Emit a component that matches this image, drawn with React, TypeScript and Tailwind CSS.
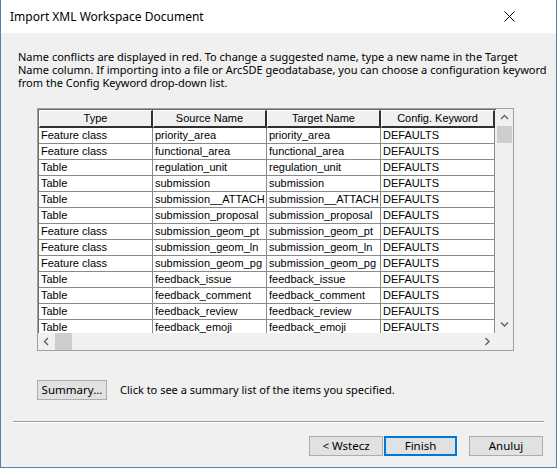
import React from 'react'

const rows: [string, string, string][] = [
  ['Feature class', 'priority_area', 'priority_area'],
  ['Feature class', 'functional_area', 'functional_area'],
  ['Table', 'regulation_unit', 'regulation_unit'],
  ['Table', 'submission', 'submission'],
  ['Table', 'submission__ATTACH', 'submission__ATTACH'],
  ['Table', 'submission_proposal', 'submission_proposal'],
  ['Feature class', 'submission_geom_pt', 'submission_geom_pt'],
  ['Feature class', 'submission_geom_ln', 'submission_geom_ln'],
  ['Feature class', 'submission_geom_pg', 'submission_geom_pg'],
  ['Table', 'feedback_issue', 'feedback_issue'],
  ['Table', 'feedback_comment', 'feedback_comment'],
  ['Table', 'feedback_review', 'feedback_review'],
  ['Table', 'feedback_emoji', 'feedback_emoji'],
]

const headers = ['Type', 'Source Name', 'Target Name', 'Config. Keyword']

const Chevron: React.FC<{ dir: 'up' | 'down' | 'left' | 'right' }> = ({ dir }) => {
  const d = {
    up: 'M1 5 L4.5 1.5 L8 5',
    down: 'M1 1.5 L4.5 5 L8 1.5',
    left: 'M5 1 L1.5 4.5 L5 8',
    right: 'M1.5 1 L5 4.5 L1.5 8',
  }[dir]
  const vertical = dir === 'up' || dir === 'down'
  return (
    <svg width={vertical ? 9 : 7} height={vertical ? 7 : 9} viewBox={vertical ? '0 0 9 7' : '0 0 7 9'}>
      <path d={d} fill="none" stroke="#606060" strokeWidth="1.4" />
    </svg>
  )
}

const WinButton: React.FC<{ label: string; primary?: boolean; className?: string }> = ({ label, primary, className }) => (
  <button
    className={`h-[20px] bg-[#e1e1e1] text-[11.5px] text-black flex items-center justify-center ${
      primary ? 'border-2 border-[#0078d7]' : 'border border-[#adadad]'
    } ${className ?? ''}`}
  >
    {label}
  </button>
)

export default function App() {
  return (
    <div className="w-[558px] h-[470px] bg-white" style={{ fontFamily: '"Noto Sans", "Open Sans", sans-serif' }}>
      <div className="w-[557px] h-[468px] border border-t-0 border-[#4f82b8] flex flex-col bg-[#f0f0f0]">
        {/* Title bar */}
        <div className="h-[33px] bg-white flex items-center justify-between pl-[9px] pr-[41px] shrink-0">
          <span className="text-[12px] text-black">Import XML Workspace Document</span>
          <svg width="11" height="11" viewBox="0 0 11 11">
            <path d="M0.5 0.5 L10.5 10.5 M10.5 0.5 L0.5 10.5" stroke="#000" strokeWidth="1" />
          </svg>
        </div>

        {/* Intro text */}
        <div className="pl-[17px] pt-[17px] text-[11px] leading-[13px] text-black">
          <p className="h-[13px] whitespace-nowrap">
            Name conflicts are displayed in red. To change a suggested name, type a new name in the Target
          </p>
          <p className="h-[13px] whitespace-nowrap">
            Name column. If importing into a file or ArcSDE geodatabase, you can choose a configuration keyword
          </p>
          <p className="h-[13px] whitespace-nowrap">from the Config Keyword drop-down list.</p>
        </div>

        {/* Grid */}
        <div
          className="ml-[36px] mt-[19px] w-[477px] h-[243px] border border-[#a0a0a0] bg-[#f0f0f0] flex"
          style={{ fontFamily: '"Liberation Sans", Arial, sans-serif' }}
        >
          <div className="flex flex-col w-[458px]">
            <div className="flex-1 overflow-hidden border-l border-t border-[#696969]">
              {/* Header */}
              <div className="flex h-[18px]">
                {headers.map((h) => (
                  <div
                    key={h}
                    className="w-[114px] shrink-0 bg-[#f0f0f0] border-t border-l border-white border-r-2 border-b-2 border-r-[#303030] border-b-[#303030] flex items-center justify-center text-[11px] text-black"
                  >
                    {h}
                  </div>
                ))}
              </div>
              {/* Rows */}
              {rows.map((r, i) => (
                <div key={i} className="flex h-[16px]">
                  {[...r, 'DEFAULTS'].map((c, j) => (
                    <div
                      key={j}
                      className="w-[114px] shrink-0 bg-white border-r border-b border-[#8a8a8a] pl-[2px] text-[11px] leading-[15px] text-black whitespace-nowrap overflow-hidden"
                    >
                      {c}
                    </div>
                  ))}
                </div>
              ))}
            </div>
            {/* Horizontal scrollbar */}
            <div className="h-[17px] bg-[#f0f0f0] flex items-center shrink-0">
              <div className="w-[17px] h-[17px] flex items-center justify-center">
                <Chevron dir="left" />
              </div>
              <div className="w-[17px] h-[17px] bg-[#cdcdcd]" />
              <div className="flex-1" />
              <div className="w-[17px] h-[17px] flex items-center justify-center">
                <Chevron dir="right" />
              </div>
            </div>
          </div>
          {/* Vertical scrollbar */}
          <div className="w-[17px] flex flex-col bg-[#f0f0f0]">
            <div className="h-[17px] flex items-center justify-center">
              <Chevron dir="up" />
            </div>
            <div className="mx-[1px] h-[17px] bg-[#cdcdcd]" />
            <div className="flex-1" />
            <div className="h-[17px] flex items-center justify-center">
              <Chevron dir="down" />
            </div>
            <div className="h-[17px]" />
          </div>
        </div>

        {/* Summary */}
        <div className="flex items-center ml-[36px] mt-[29px]">
          <WinButton label="Summary..." className="w-[70px] h-[20px]" />
          <span className="ml-[13px] text-[11px] text-black">Click to see a summary list of the items you specified.</span>
        </div>

        {/* Separator */}
        <div className="mx-[12px] mt-[21px] h-[1px] bg-[#a0a0a0] border-b border-white box-content" />

        {/* Buttons */}
        <div className="flex justify-end pr-[13px] mt-[13px]">
          <WinButton label="< Wstecz" className="w-[74px]" />
          <WinButton label="Finish" primary className="w-[73px] ml-[1px]" />
          <WinButton label="Anuluj" className="w-[74px] ml-[12px]" />
        </div>
      </div>
    </div>
  )
}
